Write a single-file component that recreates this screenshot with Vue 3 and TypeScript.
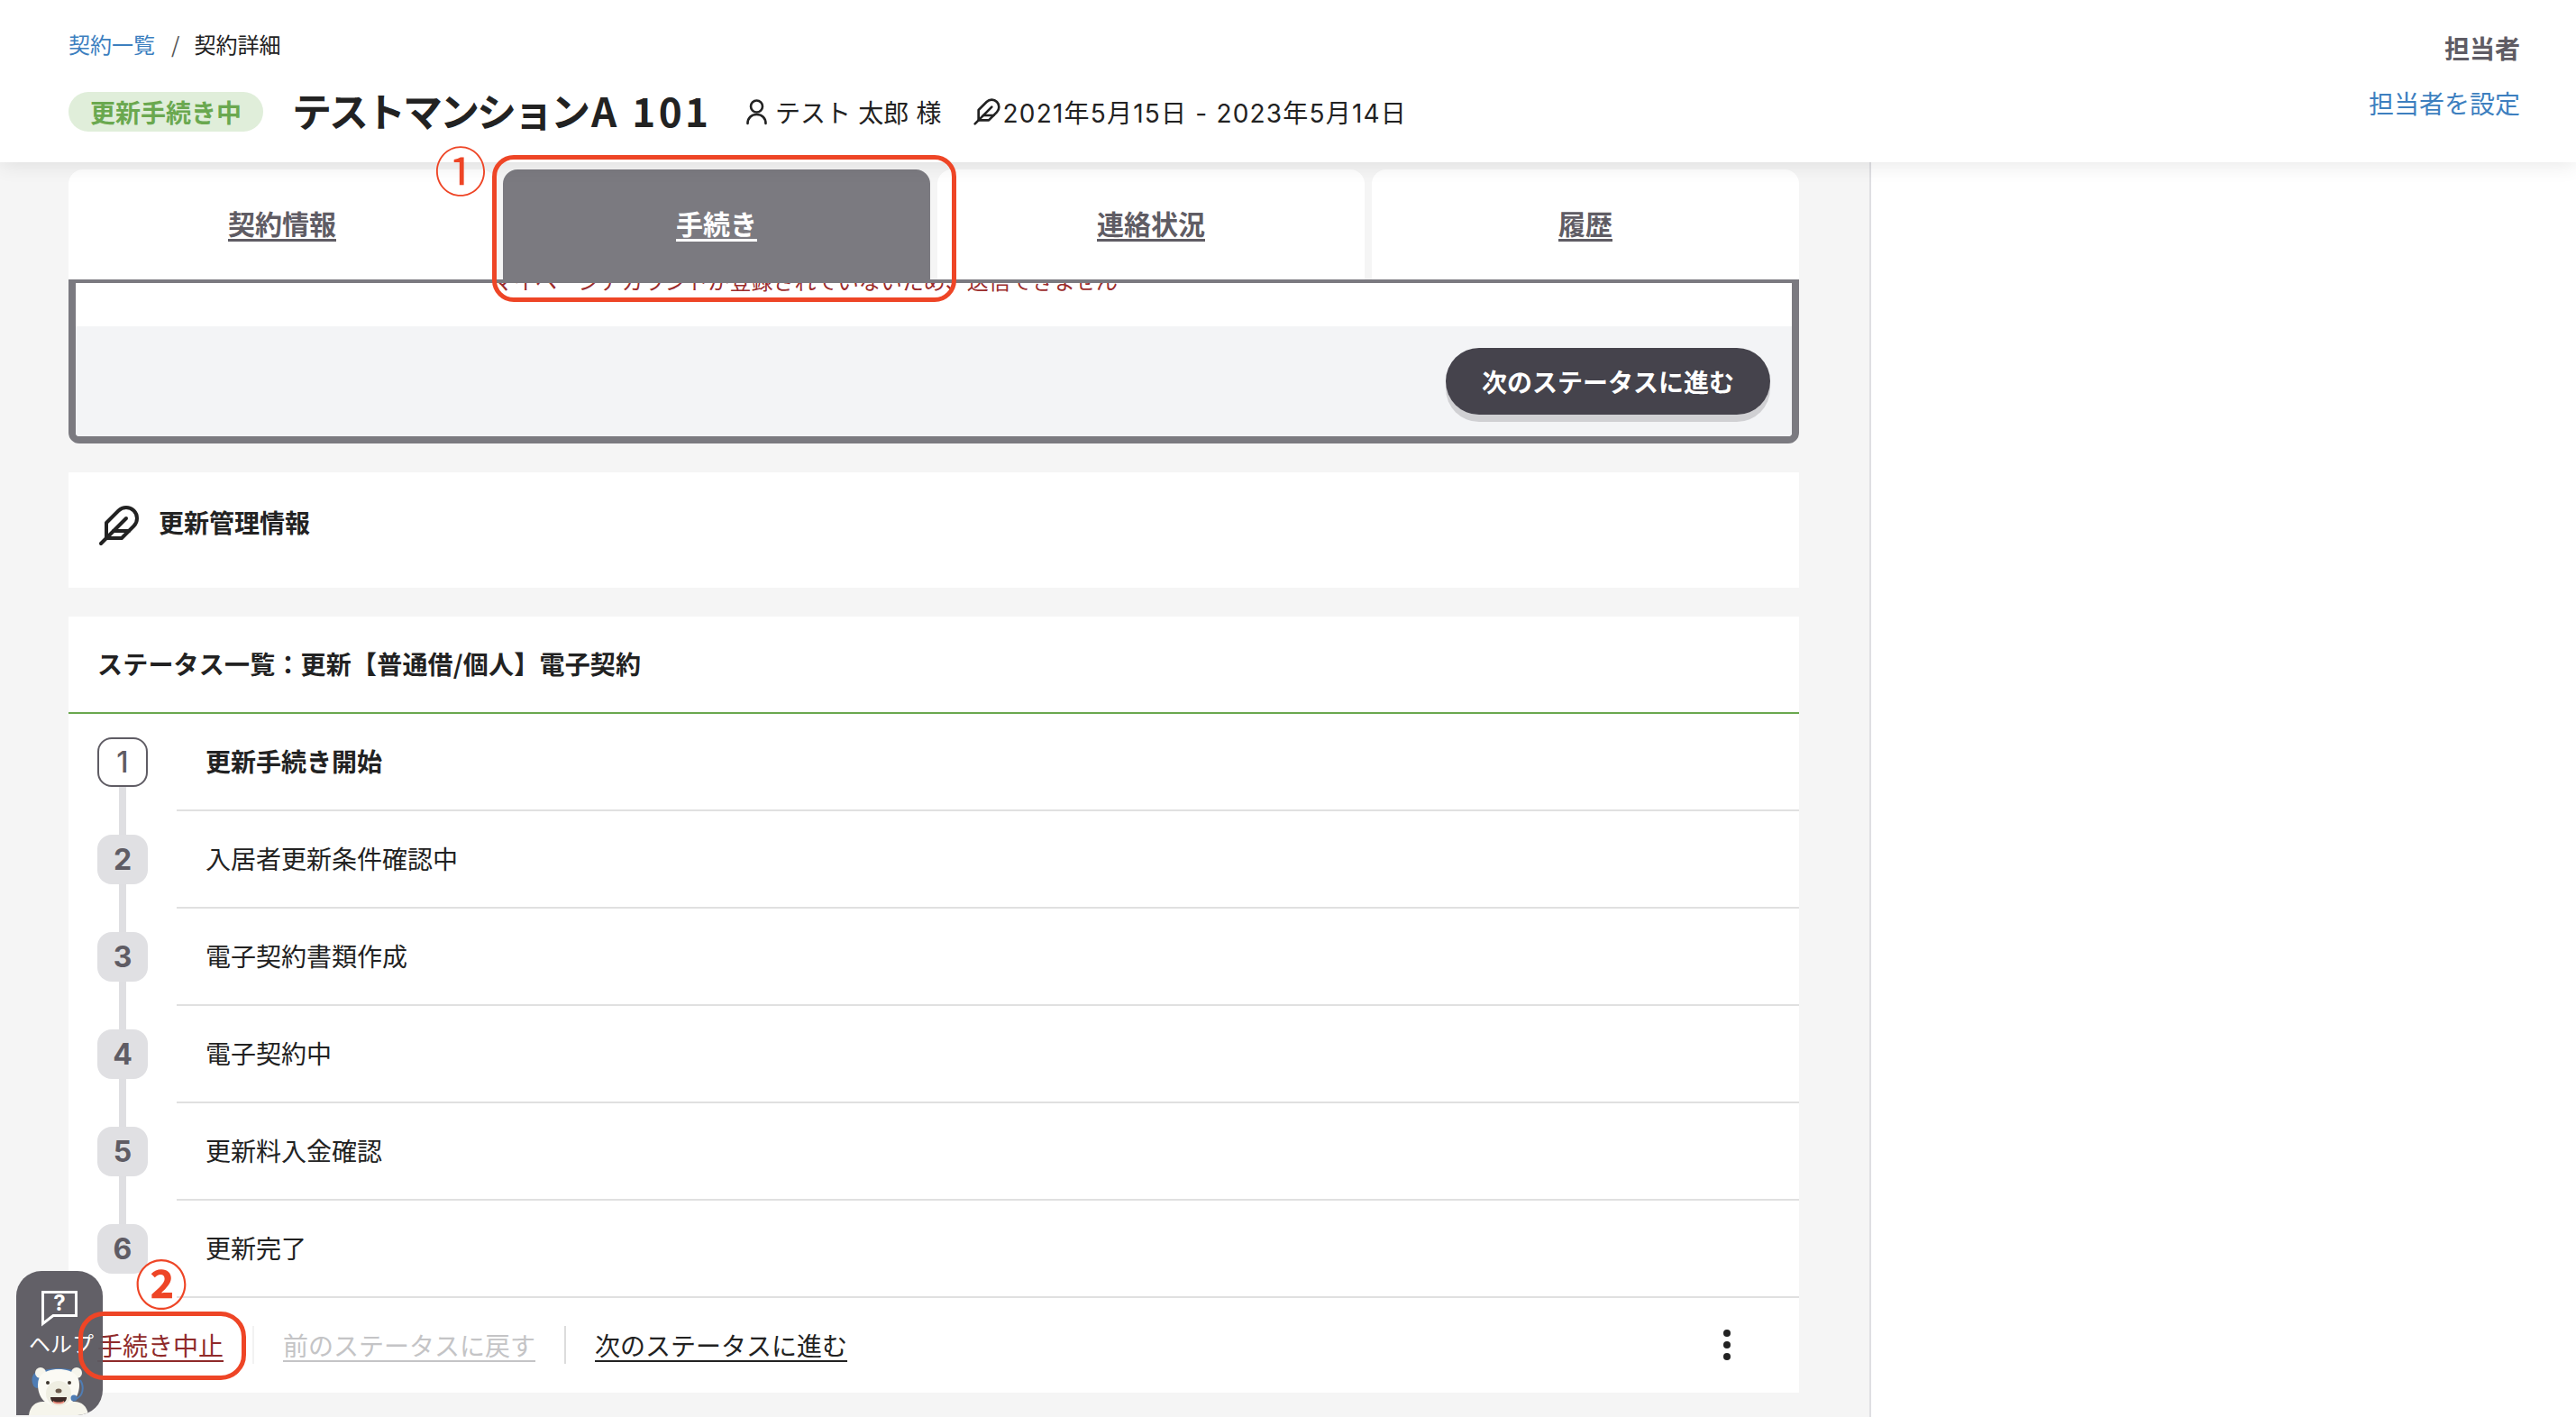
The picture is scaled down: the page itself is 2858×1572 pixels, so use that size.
<script setup lang="ts">
const tabs: { label: string; active?: boolean }[] = [
  { label: '契約情報' },
  { label: '手続き', active: true },
  { label: '連絡状況' },
  { label: '履歴' },
]
const steps: string[] = [
  '更新手続き開始',
  '入居者更新条件確認中',
  '電子契約書類作成',
  '電子契約中',
  '更新料入金確認',
  '更新完了',
]
</script>

<template>
  <div class="page">
    <header class="header">
      <div class="header-left">
        <nav class="crumbs">
          <a class="crumb-link">契約一覧</a>
          <span class="crumb-sep">/</span>
          <span>契約詳細</span>
        </nav>
        <div class="title-row">
          <span class="badge">更新手続き中</span>
          <h1 class="title"><span class="title-kana">テストマンション</span><span class="title-latin">A 101</span></h1>
          <span class="meta person">
            <svg class="meta-icon" viewBox="0 0 24 30" fill="none" stroke="#222" stroke-width="2.6">
              <circle cx="12" cy="9" r="6.5" />
              <path d="M2 28c0-6 4-10 10-10s10 4 10 10" stroke-linecap="round" />
            </svg>
            <span>テスト 太郎 様</span>
          </span>
          <span class="meta date">
            <svg class="feather-small" viewBox="0 0 24 24" fill="none" stroke="#222" stroke-width="2" stroke-linecap="round" stroke-linejoin="round">
              <path d="M20.24 12.24a6 6 0 0 0-8.49-8.49L5 10.5V19h8.5z" />
              <path d="M16 8 2 22" />
              <path d="M17.5 15H9" />
            </svg>
            <span>2021年5月15日 - 2023年5月14日</span>
          </span>
        </div>
      </div>
      <div class="header-right">
        <strong class="owner-label">担当者</strong>
        <a class="owner-link">担当者を設定</a>
      </div>
    </header>

    <div class="body">
      <main class="main">
        <div class="tabs">
          <a v-for="tab in tabs" :key="tab.label" class="tab" :class="{ 'tab-active': tab.active }">{{ tab.label }}</a>
        </div>

        <section class="panel">
          <div class="panel-message">
            <p class="error">マイページアカウントが登録されていないため、送信できません</p>
          </div>
          <div class="panel-actions">
            <button class="next-button" type="button">次のステータスに進む</button>
          </div>
        </section>

        <section class="card info-card">
          <svg class="feather" viewBox="0 0 24 24" fill="none" stroke="#222" stroke-width="2" stroke-linecap="round" stroke-linejoin="round">
            <path d="M20.24 12.24a6 6 0 0 0-8.49-8.49L5 10.5V19h8.5z" />
            <path d="M16 8 2 22" />
            <path d="M17.5 15H9" />
          </svg>
          <h2 class="card-title">更新管理情報</h2>
        </section>

        <section class="card status-card">
          <h2 class="status-title">ステータス一覧：更新【普通借/個人】電子契約</h2>
          <ol class="steps">
            <li v-for="(step, i) in steps" :key="step" class="step">
              <div class="rail">
                <span class="rail-line rail-top" :class="{ 'rail-hidden': i === 0 }"></span>
                <span class="step-no" :class="{ 'step-current': i === 0 }">{{ i + 1 }}</span>
                <span class="rail-line rail-bottom" :class="{ 'rail-hidden': i === steps.length - 1 }"></span>
              </div>
              <div class="step-label" :class="{ 'step-label-current': i === 0 }">{{ step }}</div>
            </li>
          </ol>
          <footer class="actions">
            <a class="action action-danger">手続き中止</a>
            <span class="action-sep action-sep-faint"></span>
            <a class="action action-disabled">前のステータスに戻す</a>
            <span class="action-sep"></span>
            <a class="action">次のステータスに進む</a>
            <span class="dots"><i></i><i></i><i></i></span>
          </footer>
        </section>
      </main>
      <aside class="side"></aside>
    </div>

    <div class="help">
      <svg class="help-bubble" viewBox="0 0 40 40" fill="none">
        <path d="M1.5 1.5h37v26H13L1.5 36.5z" stroke="#fff" stroke-width="3" />
      </svg>
      <span class="help-q">?</span>
      <span class="help-text">ヘルプ</span>
      <svg class="bear" viewBox="0 0 66 54">
        <path d="M0 54c1-10 8-15 15-15h36c7 0 14 5 15 15z" fill="#f6f5ec" />
        <ellipse cx="9" cy="15" rx="5.5" ry="9" fill="#4f7db5" />
        <path d="M10 10C14 1 52 1 56 10" fill="none" stroke="#4f7db5" stroke-width="2.5" />
        <circle cx="13" cy="7" r="6" fill="#f6f5ec" />
        <circle cx="53" cy="7" r="6" fill="#f6f5ec" />
        <path d="M10 20c0-12 10-17 23-17s23 5 23 17c0 15-9 24-23 24S10 35 10 20z" fill="#fbfaf4" />
        <ellipse cx="33" cy="30" rx="14" ry="14" fill="#efeee2" />
        <circle cx="21" cy="18" r="2" fill="#3d352e" />
        <circle cx="45" cy="18" r="2" fill="#3d352e" />
        <ellipse cx="33" cy="27" rx="3.5" ry="2.5" fill="#6b5a4b" />
        <path d="M24 34h18c0 5-4 7-9 7s-9-2-9-7z" fill="#3d2a26" />
        <path d="M27 38c3 2 9 2 12 0l0 2c-3 2-9 2-12 0z" fill="#e8897a" />
        <path d="M57 15c5 8 3 18-5 21" fill="none" stroke="#4f7db5" stroke-width="2" />
        <circle cx="50" cy="35" r="3.5" fill="#4f7db5" />
      </svg>
    </div>

    <div class="mark mark-tab"></div>
    <span class="num num-one">①</span>
    <div class="mark mark-stop"></div>
    <span class="num num-two">②</span>
  </div>
</template>

<style>
html, body {
  margin: 0;
  background: #f5f5f5;
}
</style>

<style scoped>
.page {
  position: relative;
  width: 2858px;
  height: 1572px;
  overflow: hidden;
  display: flex;
  flex-direction: column;
  background: #f5f5f5;
  color: #222;
  font-family: "Noto Sans CJK JP", "Noto Sans", sans-serif;
  font-size: 28px;
}
.header {
  position: relative;
  z-index: 2;
  flex: 0 0 180px;
  box-sizing: border-box;
  display: flex;
  justify-content: space-between;
  padding: 0 62px 0 76px;
  background: #fff;
  box-shadow: 0 2px 22px rgba(0, 0, 0, 0.1);
}
.crumbs {
  display: flex;
  align-items: center;
  height: 32px;
  margin-top: 32px;
  font-size: 24px;
}
.crumb-link {
  color: #3d7fbf;
}
.crumb-sep {
  margin: 0 16px 0 18px;
  color: #555;
}
.title-row {
  display: flex;
  align-items: center;
  height: 60px;
  margin-top: 30px;
}
.badge {
  box-sizing: border-box;
  width: 216px;
  height: 44px;
  line-height: 44px;
  border-radius: 22px;
  text-align: center;
  background: #e0eeda;
  color: #6aa84f;
  font-size: 28px;
  font-weight: 700;
}
.title {
  margin: -4px 0 0 32px;
  width: 456px;
  font-size: 44px;
  font-weight: 700;
  line-height: 60px;
  white-space: nowrap;
}
.title-kana {
  letter-spacing: -3px;
}
.title-latin {
  margin-left: 4px;
  letter-spacing: 3.5px;
}
.meta {
  display: flex;
  align-items: center;
  font-size: 28px;
  white-space: pre;
}
.person {
  margin-left: 47px;
  word-spacing: 2px;
}
.meta-icon {
  width: 25px;
  height: 30px;
  margin-right: 8px;
}
.date {
  margin-left: 34px;
  font-family: "Inter", "Noto Sans CJK JP", sans-serif;
  letter-spacing: 1.2px;
}
.feather-small {
  width: 32px;
  height: 32px;
  margin-right: 2px;
}
.header-right {
  display: flex;
  flex-direction: column;
  align-items: flex-end;
}
.owner-label {
  margin-top: 33px;
  line-height: 40px;
  color: #5f5c64;
  font-weight: 700;
}
.owner-link {
  margin-top: 21px;
  line-height: 40px;
  color: #3d7fbf;
}
.body {
  flex: 1;
  display: flex;
  min-height: 0;
}
.main {
  box-sizing: border-box;
  width: 2074px;
  padding: 8px 78px 0 76px;
  background: #f5f5f5;
}
.side {
  flex: 1;
  background: #fff;
  border-left: 2px solid #dfdfe2;
}
.tabs {
  display: flex;
  gap: 8px;
  height: 122px;
}
.tab {
  flex: 1;
  display: flex;
  align-items: center;
  justify-content: center;
  padding-bottom: 4px;
  border-radius: 16px 16px 0 0;
  background: #fff;
  color: #5f5c64;
  font-size: 30px;
  font-weight: 700;
  text-decoration: underline;
  text-underline-offset: 5px;
}
.tab-active {
  background: #7b7a80;
  color: #fff;
}
.panel {
  box-sizing: border-box;
  height: 182px;
  border: 8px solid #7b7a80;
  border-top-width: 4px;
  border-radius: 0 0 12px 12px;
  background: #fff;
  overflow: hidden;
}
.panel-message {
  height: 48px;
  overflow: hidden;
}
.error {
  margin: -15px 0 0 462px;
  font-size: 24px;
  line-height: 24px;
  color: #9b2c2c;
  white-space: nowrap;
}
.panel-actions {
  display: flex;
  justify-content: flex-end;
  box-sizing: border-box;
  height: 122px;
  padding: 24px 24px 0 0;
  background: #f3f4f6;
}
.next-button {
  width: 360px;
  height: 74px;
  border: 0;
  border-radius: 37px;
  background: #45434c;
  box-shadow: 0 8px 0 #d0d0d3;
  color: #fff;
  font: inherit;
  font-weight: 700;
}
.card {
  background: #fff;
}
.info-card {
  display: flex;
  align-items: flex-start;
  box-sizing: border-box;
  height: 128px;
  margin-top: 32px;
  padding: 35px 0 0 32px;
}
.feather {
  width: 48px;
  height: 48px;
  flex: none;
}
.card-title {
  margin: 0 0 0 20px;
  font-size: 28px;
  font-weight: 700;
  line-height: 40px;
}
.status-card {
  margin-top: 32px;
}
.status-title {
  box-sizing: border-box;
  height: 108px;
  margin: 0;
  padding: 32px 0 0 32px;
  border-bottom: 2px solid #6aa84f;
  font-size: 28px;
  font-weight: 700;
  line-height: 40px;
  letter-spacing: 0.2px;
}
.steps {
  margin: 0;
  padding: 0;
  list-style: none;
}
.step {
  display: flex;
  height: 108px;
}
.rail {
  flex: 0 0 120px;
  display: flex;
  flex-direction: column;
  align-items: flex-start;
  box-sizing: border-box;
  padding-left: 32px;
}
.rail-line {
  width: 8px;
  margin-left: 24px;
  background: #dfdfe2;
}
.rail-top {
  height: 26px;
}
.rail-bottom {
  height: 27px;
}
.rail-hidden {
  visibility: hidden;
}
.step-no {
  box-sizing: border-box;
  width: 56px;
  height: 55px;
  line-height: 55px;
  border-radius: 16px;
  text-align: center;
  background: #e0e0e3;
  color: #5f5c64;
  font-family: "Inter", "Noto Sans", sans-serif;
  font-size: 32px;
  font-weight: 700;
}
.step-current {
  background: #fff;
  border: 2px solid #5f5c64;
  line-height: 51px;
  font-weight: 500;
}
.step-label {
  flex: 1;
  box-sizing: border-box;
  padding: 32px 0 0 32px;
  border-bottom: 2px solid #e0e0e0;
  line-height: 40px;
}
.step-label-current {
  font-weight: 700;
}
.actions {
  position: relative;
  display: flex;
  align-items: center;
  box-sizing: border-box;
  height: 105px;
  padding: 0 76px 2px 32px;
}
.action {
  text-decoration: underline;
  text-underline-offset: 5px;
  white-space: nowrap;
}
.action-danger {
  color: #8f2a2a;
}
.action-disabled {
  color: #c4c4c6;
}
.action-sep {
  width: 2px;
  height: 42px;
  margin: 0 32px;
  background: #dcdcdc;
}
.action-sep-faint {
  background: #f2f2f2;
}
.dots {
  margin-left: auto;
  display: flex;
  flex-direction: column;
  gap: 5px;
}
.dots i {
  display: block;
  width: 8px;
  height: 8px;
  border-radius: 50%;
  background: #222;
}
.help {
  position: absolute;
  left: 18px;
  top: 1410px;
  width: 96px;
  height: 160px;
  z-index: 3;
  border-radius: 28px 28px 28px 0;
  background: rgba(92, 89, 97, 0.96);
  color: #fff;
  overflow: hidden;
}
.help-bubble {
  position: absolute;
  left: 28px;
  top: 22px;
  width: 40px;
  height: 40px;
}
.help-q {
  position: absolute;
  left: 28px;
  top: 21px;
  width: 40px;
  text-align: center;
  font-family: "Inter", sans-serif;
  font-size: 24px;
  line-height: 30px;
  font-weight: 700;
}
.help-text {
  position: absolute;
  left: 14px;
  top: 64px;
  font-size: 24px;
  line-height: 32px;
  white-space: nowrap;
}
.bear {
  position: absolute;
  left: 14px;
  top: 106px;
  width: 66px;
  height: 54px;
}
.mark {
  position: absolute;
  z-index: 4;
  box-sizing: border-box;
  border: 5px solid #ee4526;
}
.mark-tab {
  left: 546px;
  top: 172px;
  width: 515px;
  height: 163px;
  border-radius: 24px;
}
.mark-stop {
  left: 87px;
  top: 1455px;
  width: 186px;
  height: 76px;
  border-radius: 28px;
}
.num {
  position: absolute;
  z-index: 4;
  color: #ee4526;
  line-height: 50px;
  font-size: 58px;
  text-align: center;
}
.num-one {
  left: 482px;
  top: 162px;
  width: 58px;
}
.num-two {
  left: 150px;
  top: 1397px;
  width: 58px;
  font-weight: 700;
}
</style>
